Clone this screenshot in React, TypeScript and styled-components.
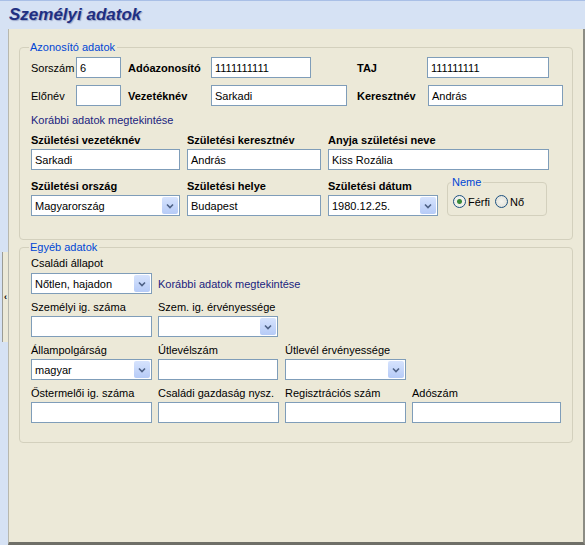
import React from 'react';
import styled, { createGlobalStyle } from 'styled-components';

const Global = createGlobalStyle`
  html, body { margin: 0; padding: 0; }
  body { font-family: "Liberation Sans", Arial, sans-serif; font-size: 11px; color: #000; }
`;

const Page = styled.div`
  width: 585px;
  height: 545px;
  display: flex;
  flex-direction: column;
  background: #d6e2f4;
  overflow: hidden;
`;

const Header = styled.div`
  height: 28px;
  border-top: 1px solid #a9bfe6;
  display: flex;
  align-items: center;
  padding-left: 9px;
  font-family: "Liberation Sans", Arial, sans-serif;
  font-style: italic;
  font-weight: bold;
  font-size: 17px;
  color: #1f2f82;
  text-shadow: 1px 1px 1px #9aa6c8;
`;

const Body = styled.div`
  flex: 1;
  display: flex;
`;

const Strip = styled.div`
  width: 8px;
  display: flex;
  align-items: center;
  justify-content: flex-end;
`;

const Tab = styled.div`
  width: 5px;
  height: 90px;
  margin-top: 20px;
  border-left: 1px solid #9c9c94;
  background: #ece9d8;
  display: flex;
  align-items: center;
  justify-content: center;
  font-size: 9px;
  font-weight: bold;
`;

const Panel = styled.div`
  flex: 1;
  background: #ece9d8;
  border-left: 1px solid #b8b8ae;
  border-right: 2px solid #8c8c84;
  border-bottom: 3px solid #6f6f68;
  padding: 12px 10px 0 10px;
  display: flex;
  flex-direction: column;
  gap: 1px;
`;

const Group = styled.fieldset<{ $h: number }>`
  margin: 0;
  height: ${(p) => p.$h}px;
  box-sizing: border-box;
  border: 1px solid #d3d0bd;
  border-radius: 4px;
  padding: 2px 0 0 11px;
  position: relative;
`;

const Legend = styled.legend`
  color: #0046d5;
  padding: 0 2px 0 1px;
  margin-left: -2px;
  font-size: 11px;
`;

const Row = styled.div<{ $mt?: number }>`
  display: flex;
  align-items: center;
  margin-top: ${(p) => p.$mt ?? 0}px;
`;

const Label = styled.span<{ $w: number; $bold?: boolean }>`
  width: ${(p) => p.$w}px;
  flex: none;
  font-weight: ${(p) => (p.$bold ? 'bold' : 'normal')};
  white-space: nowrap;
`;

const Input = styled.div<{ $w: number; $mr?: number }>`
  width: ${(p) => p.$w}px;
  margin-right: ${(p) => p.$mr ?? 0}px;
  height: 21px;
  flex: none;
  box-sizing: border-box;
  border: 1px solid #7f9db9;
  background: #fff;
  padding: 0 3px;
  display: flex;
  align-items: center;
  white-space: nowrap;
`;

const Select = styled(Input)`
  justify-content: space-between;
  padding-right: 1px;
`;

const DropBtn = styled.span`
  width: 16px;
  height: 17px;
  background: linear-gradient(#d6e3fd, #b6cbf7);
  border-radius: 2px;
  display: flex;
  align-items: center;
  justify-content: center;
`;

const Link = styled.span`
  color: #1a237e;
  white-space: nowrap;
`;

const Cols = styled.div<{ $mt: number }>`
  display: flex;
  align-items: flex-end;
  margin-top: ${(p) => p.$mt}px;
`;

const Col = styled.div<{ $w: number }>`
  width: ${(p) => p.$w}px;
  flex: none;
  display: flex;
  flex-direction: column;
  gap: 3px;
`;

const Neme = styled.fieldset`
  margin: -1px 0 0 9px;
  width: 100px;
  height: 40px;
  box-sizing: border-box;
  border: 1px solid #d3d0bd;
  border-radius: 4px;
  padding: 0 0 0 5px;
  display: flex;
  align-items: center;
  gap: 5px;
`;

const Radio = styled.span<{ $on?: boolean }>`
  display: inline-flex;
  align-items: center;
  gap: 2px;
  &::before {
    content: '';
    width: 11px;
    height: 11px;
    border-radius: 50%;
    border: 1px solid #1c5180;
    background: radial-gradient(circle, ${(p) => (p.$on ? '#3a8a3a 0 2px, #f0f0ea 3px' : '#f4f4ee 0, #dcdcd4 100%')});
  }
`;

const Chevron = () => (
  <svg width="8" height="6" viewBox="0 0 8 6">
    <path d="M1 1.5 L4 4.5 L7 1.5" stroke="#4d6185" strokeWidth="1.6" fill="none" />
  </svg>
);

const Sel = ({ w, v, mr }: { w: number; v?: string; mr?: number }) => (
  <Select $w={w} $mr={mr}>
    <span>{v}</span>
    <DropBtn>
      <Chevron />
    </DropBtn>
  </Select>
);

export default function App() {
  return (
    <Page>
      <Global />
      <Header>Személyi adatok</Header>
      <Body>
        <Strip>
          <Tab>‹</Tab>
        </Strip>
        <Panel>
          <Group $h={199}>
            <Legend>Azonosító adatok</Legend>
            <Row $mt={2}>
              <Label $w={45}>Sorszám</Label>
              <Input $w={45} $mr={7}>6</Input>
              <Label $w={83} $bold>Adóazonosító</Label>
              <Input $w={100} $mr={46}>1111111111</Input>
              <Label $w={70} $bold>TAJ</Label>
              <Input $w={122}>111111111</Input>
            </Row>
            <Row $mt={7}>
              <Label $w={45}>Előnév</Label>
              <Input $w={45} $mr={7} />
              <Label $w={83} $bold>Vezetéknév</Label>
              <Input $w={136} $mr={10}>Sarkadi</Input>
              <Label $w={71} $bold>Keresztnév</Label>
              <Input $w={135}>András</Input>
            </Row>
            <Row $mt={8}>
              <Link>Korábbi adatok megtekintése</Link>
            </Row>
            <Cols $mt={8}>
              <Col $w={156}>
                <Label $w={156} $bold>Születési vezetéknév</Label>
                <Input $w={149}>Sarkadi</Input>
              </Col>
              <Col $w={141}>
                <Label $w={141} $bold>Születési keresztnév</Label>
                <Input $w={134}>András</Input>
              </Col>
              <Col $w={221}>
                <Label $w={221} $bold>Anyja születési neve</Label>
                <Input $w={221}>Kiss Rozália</Input>
              </Col>
            </Cols>
            <Cols $mt={7}>
              <Col $w={156}>
                <Label $w={156} $bold>Születési ország</Label>
                <Sel w={149} v="Magyarország" />
              </Col>
              <Col $w={141}>
                <Label $w={141} $bold>Születési helye</Label>
                <Input $w={134}>Budapest</Input>
              </Col>
              <Col $w={110}>
                <Label $w={110} $bold>Születési dátum</Label>
                <Sel w={110} v="1980.12.25." />
              </Col>
              <Neme>
                <Legend>Neme</Legend>
                <Radio $on>Férfi</Radio>
                <Radio>Nő</Radio>
              </Neme>
            </Cols>
          </Group>
          <Group $h={202}>
            <Legend>Egyéb adatok</Legend>
            <Row $mt={2}>
              <Label $w={120}>Családi állapot</Label>
            </Row>
            <Row $mt={4}>
              <Sel w={121} mr={6} v="Nőtlen, hajadon" />
              <Link>Korábbi adatok megtekintése</Link>
            </Row>
            <Cols $mt={7}>
              <Col $w={127}>
                <Label $w={127}>Személyi ig. száma</Label>
                <Input $w={121} />
              </Col>
              <Col $w={127}>
                <Label $w={127}>Szem. ig. érvényessége</Label>
                <Sel w={120} />
              </Col>
            </Cols>
            <Cols $mt={7}>
              <Col $w={127}>
                <Label $w={127}>Állampolgárság</Label>
                <Sel w={121} v="magyar" />
              </Col>
              <Col $w={127}>
                <Label $w={127}>Útlevélszám</Label>
                <Input $w={120} />
              </Col>
              <Col $w={127}>
                <Label $w={127}>Útlevél érvényessége</Label>
                <Sel w={121} />
              </Col>
            </Cols>
            <Cols $mt={7}>
              <Col $w={127}>
                <Label $w={127}>Őstermelői ig. száma</Label>
                <Input $w={121} />
              </Col>
              <Col $w={127}>
                <Label $w={127}>Családi gazdaság nysz.</Label>
                <Input $w={121} />
              </Col>
              <Col $w={127}>
                <Label $w={127}>Regisztrációs szám</Label>
                <Input $w={121} />
              </Col>
              <Col $w={149}>
                <Label $w={149}>Adószám</Label>
                <Input $w={149} />
              </Col>
            </Cols>
          </Group>
        </Panel>
      </Body>
    </Page>
  );
}
